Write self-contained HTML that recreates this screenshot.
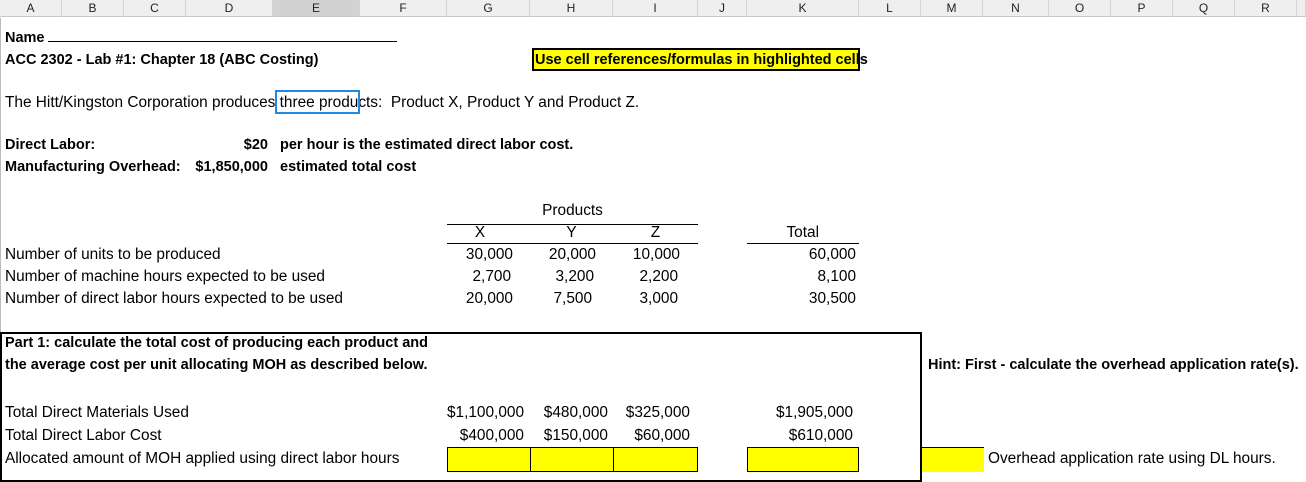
<!DOCTYPE html><html><head><style>
body{margin:0;width:1306px;height:472px;overflow:hidden;background:#fff;font-family:"Liberation Sans",sans-serif;font-size:15.4px;color:#000;position:relative}
.h{position:absolute;top:0;height:17px;background:#efefef;border-right:1px solid #d4d4d4;border-bottom:1px solid #c8c8c8;font-size:12px;text-align:center;line-height:17px;color:#222;box-sizing:border-box}
.t{position:absolute;white-space:nowrap;line-height:16px;margin-top:1px}
.b{font-weight:bold;font-size:14.5px}
.r{text-align:right}
.c{text-align:center}
.y{position:absolute;background:#ff0;border:1px solid #000;box-sizing:border-box}
.l{position:absolute;height:1px;background:#000}
</style></head><body>
<div class="h" style="left:0;width:62px">A</div>
<div class="h" style="left:62px;width:62px">B</div>
<div class="h" style="left:124px;width:62px">C</div>
<div class="h" style="left:186px;width:87px">D</div>
<div class="h" style="left:273px;width:87px;background:#d2d2d2">E</div>
<div class="h" style="left:360px;width:87px">F</div>
<div class="h" style="left:447px;width:83px">G</div>
<div class="h" style="left:530px;width:83px">H</div>
<div class="h" style="left:613px;width:85px">I</div>
<div class="h" style="left:698px;width:49px">J</div>
<div class="h" style="left:747px;width:112px">K</div>
<div class="h" style="left:859px;width:62px">L</div>
<div class="h" style="left:921px;width:62px">M</div>
<div class="h" style="left:983px;width:66px">N</div>
<div class="h" style="left:1049px;width:62px">O</div>
<div class="h" style="left:1111px;width:62px">P</div>
<div class="h" style="left:1173px;width:62px">Q</div>
<div class="h" style="left:1235px;width:62px">R</div>
<div class="h" style="left:1297px;width:9px"></div>
<div style="position:absolute;left:0;top:18px;width:1px;height:454px;background:#bbb"></div>

<div class="t b" style="left:5px;top:29px">Name</div>
<div class="l" style="left:48px;top:41px;width:349px"></div>
<div class="t b" style="left:5px;top:51px">ACC 2302 - Lab #1: Chapter 18 (ABC Costing)</div>
<div class="y" style="left:532px;top:48px;width:328px;height:23px;border-width:2px"></div>
<div class="t b" style="left:535px;top:51px">Use cell references/formulas in highlighted cells</div>

<div class="t" style="left:5px;top:94px">The Hitt/Kingston Corporation produces three products:&nbsp; Product X, Product Y and Product Z.</div>
<div style="position:absolute;left:275px;top:90px;width:85px;height:24px;border:2px solid #1e88e5;box-sizing:border-box"></div>

<div class="t b" style="left:5px;top:136px">Direct Labor:</div>
<div class="t b r" style="left:200px;top:136px;width:68px">$20</div>
<div class="t b" style="left:280px;top:136px">per hour is the estimated direct labor cost.</div>
<div class="t b" style="left:5px;top:158px">Manufacturing Overhead:</div>
<div class="t b r" style="left:180px;top:158px;width:88px">$1,850,000</div>
<div class="t b" style="left:280px;top:158px">estimated total cost</div>

<div class="t c" style="left:447px;top:202px;width:251px">Products</div>
<div class="l" style="left:447px;top:224px;width:251px"></div>
<div class="t c" style="left:447px;top:224px;width:66px">X</div>
<div class="t c" style="left:530px;top:224px;width:83px">Y</div>
<div class="t c" style="left:613px;top:224px;width:85px">Z</div>
<div class="t r" style="left:747px;top:224px;width:72px">Total</div>
<div class="l" style="left:447px;top:243px;width:251px"></div>
<div class="l" style="left:747px;top:243px;width:112px"></div>

<div class="t" style="left:5px;top:246px">Number of units to be produced</div>
<div class="t" style="left:5px;top:268px">Number of machine hours expected to be used</div>
<div class="t" style="left:5px;top:290px">Number of direct labor hours expected to be used</div>
<div class="t r" style="left:427px;top:246px;width:86px">30,000</div>
<div class="t r" style="left:510px;top:246px;width:86px">20,000</div>
<div class="t r" style="left:593px;top:246px;width:87px">10,000</div>
<div class="t r" style="left:747px;top:246px;width:109px">60,000</div>
<div class="t r" style="left:427px;top:268px;width:84px">2,700</div>
<div class="t r" style="left:510px;top:268px;width:84px">3,200</div>
<div class="t r" style="left:593px;top:268px;width:85px">2,200</div>
<div class="t r" style="left:747px;top:268px;width:109px">8,100</div>
<div class="t r" style="left:427px;top:290px;width:86px">20,000</div>
<div class="t r" style="left:510px;top:290px;width:82px">7,500</div>
<div class="t r" style="left:593px;top:290px;width:85px">3,000</div>
<div class="t r" style="left:747px;top:290px;width:109px">30,500</div>

<div style="position:absolute;left:0;top:332px;width:922px;height:150px;border:2px solid #000;box-sizing:border-box"></div>
<div class="t b" style="left:5px;top:334px">Part 1: calculate the total cost of producing each product and</div>
<div class="t b" style="left:5px;top:356px">the average cost per unit allocating MOH as described below.</div>
<div class="t b" style="left:928px;top:356px">Hint: First - calculate the overhead application rate(s).</div>

<div class="t" style="left:5px;top:404px">Total Direct Materials Used</div>
<div class="t" style="left:5px;top:427px">Total Direct Labor Cost</div>
<div class="t" style="left:5px;top:450px">Allocated amount of MOH applied using direct labor hours</div>
<div class="t r" style="left:420px;top:404px;width:104px">$1,100,000</div>
<div class="t r" style="left:520px;top:404px;width:88px">$480,000</div>
<div class="t r" style="left:603px;top:404px;width:87px">$325,000</div>
<div class="t r" style="left:747px;top:404px;width:106px">$1,905,000</div>
<div class="t r" style="left:420px;top:427px;width:104px">$400,000</div>
<div class="t r" style="left:520px;top:427px;width:88px">$150,000</div>
<div class="t r" style="left:603px;top:427px;width:87px">$60,000</div>
<div class="t r" style="left:747px;top:427px;width:106px">$610,000</div>
<div class="y" style="left:447px;top:447px;width:84px;height:25px"></div>
<div class="y" style="left:530px;top:447px;width:84px;height:25px"></div>
<div class="y" style="left:613px;top:447px;width:85px;height:25px"></div>
<div class="y" style="left:747px;top:447px;width:112px;height:25px"></div>
<div class="y" style="left:922px;top:447px;width:62px;height:25px;border:none;border-top:1px solid #000"></div>
<div class="t" style="left:988px;top:450px">Overhead application rate using DL hours.</div>
</body></html>
